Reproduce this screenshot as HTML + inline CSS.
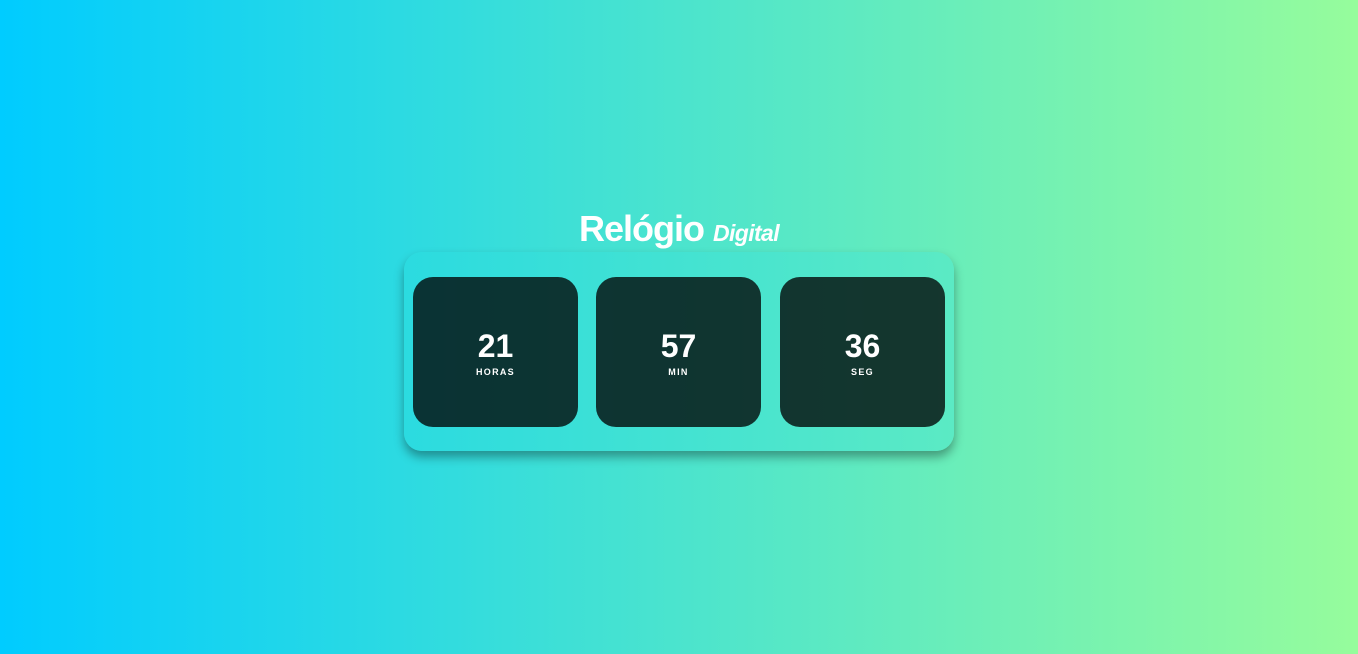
<!DOCTYPE html>
<html><head><meta charset="utf-8"><style>
html,body{margin:0;padding:0;width:1358px;height:654px;overflow:hidden}
body{background:linear-gradient(to right,#00ccff 0%,#96fc9c 100%);font-family:"Liberation Sans",sans-serif;position:relative}
h1{position:absolute;left:0;width:1358px;top:204px;margin:0;text-align:center;color:#fff;font-size:36px;font-weight:bold;letter-spacing:-1px;line-height:50px}
h1 i{font-size:23px;letter-spacing:-0.6px}
.c{position:absolute;left:404px;top:252px;width:550px;height:199px;border-radius:18px;background:linear-gradient(to right,#2bdbe0,#5beac4);box-shadow:0 6px 10px rgba(0,0,0,0.35)}
.b{position:absolute;top:25px;width:165px;height:150px;border-radius:20px;background:rgba(0,0,0,0.77);color:#fff;text-align:center}
.n{position:absolute;top:51px;left:0;right:0;font-size:32px;font-weight:bold;line-height:36px}
.l{position:absolute;top:90px;left:0;right:0;font-size:9px;font-weight:bold;letter-spacing:1.3px}
</style></head><body>
<h1>Relógio <i>Digital</i></h1>
<div class="c">
<div class="b" style="left:9px"><div class="n">21</div><div class="l">HORAS</div></div>
<div class="b" style="left:192px"><div class="n">57</div><div class="l">MIN</div></div>
<div class="b" style="left:376px"><div class="n">36</div><div class="l">SEG</div></div>
</div>
</body></html>
